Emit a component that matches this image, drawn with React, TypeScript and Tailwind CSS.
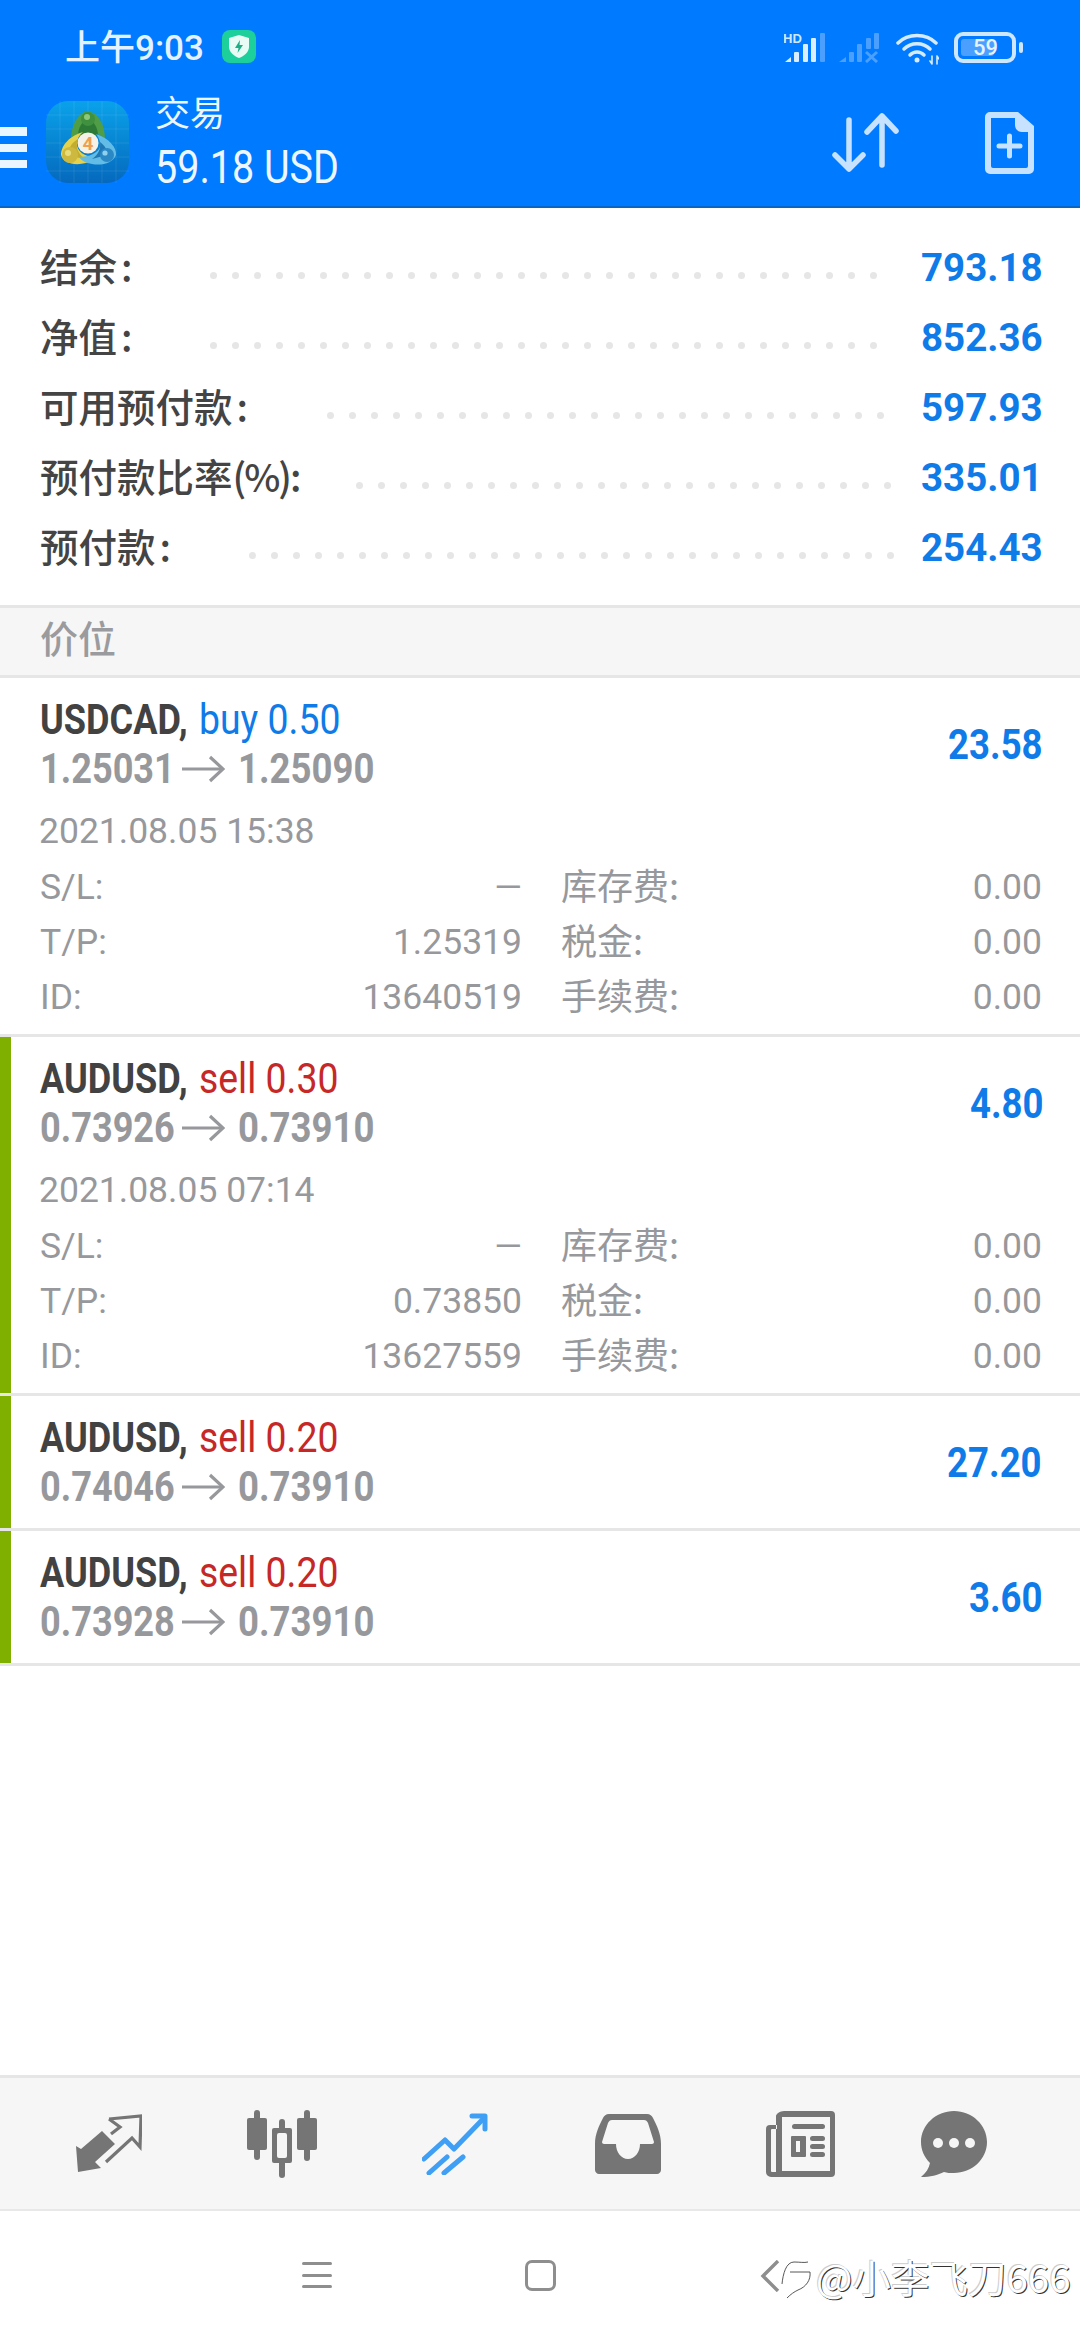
import React from "react";

const cjk = "font-['Noto_Sans_CJK_SC','Noto_Sans',sans-serif]";
const rb = "font-['Roboto','Noto_Sans_CJK_SC',sans-serif]";

function Dots({ n, mr }: { n: number; mr: string }) {
  return (
    <div className={`flex-1 flex justify-end gap-[15px] mt-[15px] overflow-hidden ${mr}`}>
      {Array.from({ length: n }).map((_, i) => (
        <span key={i} className="w-[7px] h-[7px] shrink-0 rounded-full bg-[#e6e6e6]" />
      ))}
    </div>
  );
}

function SummaryRow({ label, value, n, mr }: { label: React.ReactNode; value: string; n: number; mr: string }) {
  return (
    <div className="h-[70px] flex items-center">
      <span className={`${cjk} -mt-[6px] text-[38.5px] leading-[70px] font-medium text-[#444444] whitespace-nowrap`}>{label}</span>
      <Dots n={n} mr={mr} />
      <span className={`${rb} w-[120px] text-right text-[38.5px] font-bold text-[#0f7be8] whitespace-nowrap`}>{value}</span>
    </div>
  );
}

function Arrow() {
  return (
    <svg width="43" height="30" viewBox="0 0 43 30" className="mx-[13px] shrink-0" fill="none" stroke="#97989c" strokeWidth="3.2">
      <path d="M0 15H40" />
      <path d="M28 3L41 15L28 27" />
    </svg>
  );
}

function Price({ a, b }: { a: string; b: string }) {
  return (
    <div className={`${rb} h-[48px] mt-[1px] flex items-center text-[42px] leading-[48px] font-bold text-[#97989c]`}>
      <span className="w-[129px] whitespace-nowrap inline-block scale-x-[0.86] origin-left">{a}</span>
      <Arrow />
      <span className="w-[135px] whitespace-nowrap inline-block scale-x-[0.87] origin-left">{b}</span>
    </div>
  );
}

function Top({ sym, side, color, a, b, profit }: { sym: string; side: string; color: string; a: string; b: string; profit: string }) {
  return (
    <div className="h-[132px] flex justify-between items-center">
      <div>
        <div className={`${rb} h-[48px] text-[42px] leading-[48px] whitespace-nowrap`}>
          <span className="inline-block scale-x-[0.86] origin-left w-[159px] font-bold text-[#424242]">{sym},</span>
          <span className={`inline-block scale-x-[0.89] origin-left ${color}`}>{side}</span>
        </div>
        <Price a={a} b={b} />
      </div>
      <span className={`${rb} text-[42px] font-bold text-[#0f7be8] inline-block scale-x-[0.87] origin-right -mr-[1px]`}>{profit}</span>
    </div>
  );
}

function Cell({ l, v, cn }: { l: string; v: string; cn: boolean }) {
  return (
    <div className="flex justify-between h-[55px] items-center text-[35.5px] text-[#97989c]">
      <span className={cn ? `${cjk} -mt-[8px] text-[36px]` : rb}>{l}</span>
      <span className={rb}>{v}</span>
    </div>
  );
}

function Details({ date, tp, id }: { date: string; tp: string; id: string }) {
  return (
    <div>
      <div className={`${rb} h-[38px] mt-[2px] -ml-[1px] text-[35.5px] leading-[38px] text-[#97989c]`}>{date}</div>
      <div className="grid grid-cols-[482px_481px] gap-x-[39px] pt-[10px] pb-[9px]">
        <Cell l="S/L:" v="—" cn={false} />
        <Cell l="库存费:" v="0.00" cn />
        <Cell l="T/P:" v={tp} cn={false} />
        <Cell l="税金:" v="0.00" cn />
        <Cell l="ID:" v={id} cn={false} />
        <Cell l="手续费:" v="0.00" cn />
      </div>
    </div>
  );
}

function Row({ strip, children }: { strip: boolean; children: React.ReactNode }) {
  return (
    <div className="flex border-b-[3px] border-[#e6e6e6]">
      <div className={`w-[11px] shrink-0 ${strip ? "bg-[#7fb000]" : ""}`} />
      <div className="flex-1 pl-[29px] pr-[39px]">{children}</div>
    </div>
  );
}

function Logo() {
  return (
    <svg width="83" height="82" viewBox="0 0 83 82" className="shrink-0">
      <defs>
        <linearGradient id="lg" x1="0" y1="0" x2="0" y2="1">
          <stop offset="0" stopColor="#0aa2ea" />
          <stop offset="1" stopColor="#0569bd" />
        </linearGradient>
      </defs>
      <rect width="83" height="82" rx="22" fill="url(#lg)" />
      <path d="M14 0V82M28 0V82M42 0V82M56 0V82M70 0V82M0 14H83M0 28H83M0 42H83M0 56H83M0 70H83" stroke="#ffffff" strokeOpacity="0.09" strokeWidth="1" />
      <path d="M42 10C32 12 26 22 25 37C30 33 36 31 42 31C48 31 54 33 59 38C59 23 52 12 42 10Z" fill="#4f9d45" />
      <path d="M42 17C36 20 32 27 32 35L52 35C52 27 48 20 42 17Z" fill="#2c7a36" />
      <circle cx="42" cy="18" r="7" fill="#3f9140" />
      <circle cx="41" cy="16" r="3" fill="#8cc77a" />
      <path d="M37 31C25 34 15 44 15 54C17 62 28 65 40 62C45 61 48 59 50 56C38 56 31 50 31 43C31 38 33 34 37 31Z" fill="#e6d24a" />
      <path d="M32 38C25 42 21 49 23 56L38 57C32 53 29 45 32 38Z" fill="#c2ad30" />
      <circle cx="24" cy="54" r="8" fill="#cdb940" />
      <circle cx="22" cy="52" r="3" fill="#e9dc7c" />
      <path d="M50 33C63 37 71 47 70 54C67 62 56 65 46 63C40 62 36 60 33 56C43 56 52 52 54 46C55 41 53 37 50 33Z" fill="#62bce6" />
      <path d="M54 41C59 45 62 49 61 54L46 58C52 54 55 48 54 41Z" fill="#1f78b4" />
      <circle cx="61" cy="54" r="7" fill="#2a88c4" />
      <circle cx="59" cy="52" r="2.6" fill="#8fd0ef" />
      <circle cx="42" cy="42" r="10.5" fill="#f6f1e6" />
      <text x="42" y="49" textAnchor="middle" fontSize="19" fontWeight="700" fill="#ef9f52" fontFamily="Roboto">4</text>
    </svg>
  );
}

function StatusRight() {
  return (
    <div className="flex items-start">
      <svg width="41" height="31" viewBox="0 0 41 31">
        <text x="-1" y="11" fontSize="13" fontWeight="700" fill="#cfe8ff" fontFamily="Liberation Sans">HD</text>
        <path d="M1 30L7 25V30Z" fill="#dbeeff" />
        <rect x="10" y="20" width="5" height="10" rx="1" fill="#dbeeff" />
        <rect x="19" y="12" width="5" height="18" rx="1" fill="#dbeeff" />
        <rect x="27" y="6" width="5" height="24" rx="1" fill="#dbeeff" />
        <rect x="36" y="1" width="5" height="29" rx="1" fill="#4a9fff" />
      </svg>
      <svg width="40" height="31" viewBox="0 0 40 31" className="ml-[14px]" fill="#4a9fff">
        <path d="M0 30L7 25V30Z" />
        <rect x="10" y="20" width="5" height="10" rx="1" />
        <rect x="18" y="12" width="5" height="18" rx="1" />
        <rect x="27" y="6" width="5" height="11" rx="1" />
        <rect x="35" y="1" width="5" height="16" rx="1" />
        <path d="M27 20L38 30M38 20L27 30" stroke="#4a9fff" strokeWidth="3" fill="none" />
      </svg>
      <svg width="43" height="33" viewBox="0 0 43 33" className="ml-[17px]" fill="none" stroke="#d6ebff" strokeLinecap="round">
        <path d="M2 11C12 1 30 1 40 11" strokeWidth="3.5" />
        <path d="M8 17C15 10 27 10 34 17" strokeWidth="3.5" />
        <path d="M14 23C18 19 24 19 28 23" strokeWidth="3.5" />
        <circle cx="21" cy="28" r="2.5" fill="#d6ebff" stroke="none" />
        <path d="M36 24V32M36 32L34 29M41 32V24M41 24L43 27" strokeWidth="1.6" />
      </svg>
      <div className="ml-[15px] relative w-[62px] h-[31px] rounded-[9px] border-[4px] border-[#cfe6ff] flex items-center">
        <div className="ml-[3px] w-[33px] h-[17px] rounded-[3px] bg-[#4a9fff]" />
        <span className={`${rb} absolute left-[15px] top-[-3px] text-[22px] leading-[29px] font-medium text-[#e6f3ff]`}>59</span>
      </div>
      <div className="ml-[3px] mt-[10px] w-[4px] h-[11px] rounded-full bg-[#cfe6ff]" />
    </div>
  );
}

const navC = "#757575";

function NavIcons() {
  return (
    <div className="h-[133px] bg-[#f6f6f6] pl-[22px] flex items-center border-b-[2px] border-[#e8e8e8]">
      <div className="w-[173px] flex justify-center">
        <svg width="66" height="60" viewBox="0 0 66 60">
          <path d="M0 32L5 35L26 17L39 30L19 48L25 54L2 58Z" fill={navC} />
          <path d="M33 5L65 2L64 33L56 24L30 48M33 5L44 13L35 20" fill="none" stroke={navC} strokeWidth="3.2" strokeLinejoin="miter" />
        </svg>
      </div>
      <div className="w-[173px] flex justify-center">
        <svg width="70" height="68" viewBox="0 0 70 68" fill={navC}>
          <rect x="7" y="0" width="6" height="50" rx="3" />
          <rect x="0" y="8" width="20" height="32" rx="2" />
          <rect x="32" y="9" width="6" height="59" rx="3" />
          <rect x="25" y="18" width="20" height="35" rx="2" />
          <rect x="30" y="23" width="10" height="25" rx="2" fill="#f6f6f6" />
          <rect x="57" y="0" width="6" height="51" rx="3" />
          <rect x="50" y="8" width="20" height="32" rx="2" />
        </svg>
      </div>
      <div className="w-[173px] flex justify-center">
        <svg width="66" height="62" viewBox="0 0 66 62" fill="none" stroke="#3f9ff5" strokeWidth="5" strokeLinecap="round" strokeLinejoin="round">
          <path d="M2 46L23 27L32 36L62 5" />
          <path d="M50 3H63V16" />
          <path d="M25 44L7 60M41 44L22 60" />
        </svg>
      </div>
      <div className="w-[173px] flex justify-center">
        <svg width="66" height="60" viewBox="0 0 66 60">
          <path fillRule="evenodd" fill={navC} d="M14 0H52C55 0 57 2 58 4C62 12 66 20 66 30V56C66 58 64 60 62 60H4C2 60 0 58 0 56V30C0 20 4 12 8 4C9 2 11 0 14 0ZM17 6C15 6 14 7 13 9L7 28C7 29 8 30 9 30H21C21 38 26 45 33 45C40 45 45 38 45 30H57C58 30 59 29 59 28L53 9C52 7 51 6 49 6Z" />
        </svg>
      </div>
      <div className="w-[173px] flex justify-center">
        <svg width="69" height="66" viewBox="0 0 69 66" fill={navC}>
          <path fillRule="evenodd" d="M18 0H65a4 4 0 0 1 4 4V62a4 4 0 0 1-4 4H5a5 5 0 0 1-5-5V18a4 4 0 0 1 4-4H11V18H6a1 1 0 0 0-1 1V60a1 1 0 0 0 1 1H10V5C10 3 14 0 18 0ZM16 6V60H64V6Z" />
          <rect x="26" y="13" width="33" height="5" rx="2.5" />
          <path fillRule="evenodd" d="M26 25H39a1 1 0 0 1 1 1V45a1 1 0 0 1-1 1H26a1 1 0 0 1-1-1V26a1 1 0 0 1 1-1ZM30 30V41H34V30Z" />
          <rect x="44" y="25" width="15" height="5" rx="2.5" />
          <rect x="44" y="33" width="15" height="5" rx="2.5" />
          <rect x="44" y="41" width="15" height="5" rx="2.5" />
        </svg>
      </div>
      <div className="w-[133px] flex justify-center">
        <svg width="66" height="66" viewBox="0 0 66 66">
          <path fill={navC} d="M33 0C51 0 66 14 66 31C66 48 51 62 33 62C29 62 26 62 23 61C17 64 9 66 0 66C5 62 8 57 9 52C3 46 0 39 0 31C0 14 15 0 33 0Z" />
          <circle cx="17" cy="32" r="5" fill="#f6f6f6" />
          <circle cx="33" cy="32" r="5" fill="#f6f6f6" />
          <circle cx="49" cy="32" r="5" fill="#f6f6f6" />
        </svg>
      </div>
    </div>
  );
}

export default function App() {
  return (
    <div className="relative w-[1080px] h-[2340px] bg-white flex flex-col overflow-hidden">
      <header className="h-[208px] bg-[#007aff] border-b-[2px] border-[#0a66c4] shrink-0">
        <div className="h-[94px] flex justify-between pt-[32px] pr-[57px] pl-[65px]">
          <div className="flex items-start">
            <span className={`${rb} mt-[2px] text-[35px] leading-[30px] font-medium text-[#e4f2ff] whitespace-nowrap`}>上午9:03</span>
            <div className="ml-[18px] -mt-[2px] w-[34px] h-[33px] rounded-[8px] bg-[#1dcf9b] flex items-center justify-center">
              <svg width="20" height="23" viewBox="0 0 20 23">
                <path d="M10 0L20 3V12C20 17 15 21 10 23C5 21 0 17 0 12V3Z" fill="#e9fbf5" />
                <path d="M11 5L6 13H9.5L8.5 18L14 10H10.5Z" fill="#1dae84" />
              </svg>
            </div>
          </div>
          <StatusRight />
        </div>
        <div className="h-[112px] flex items-center">
          <div className="w-[27px] h-[41px] mt-[-6px] flex flex-col justify-between">
            <div className="h-[9px] bg-[#eaf5ff]" />
            <div className="h-[8px] bg-[#eaf5ff]" />
            <div className="h-[8px] bg-[#eaf5ff]" />
          </div>
          <div className="ml-[19px] mt-[-16px]">
            <Logo />
          </div>
          <div className="ml-[26px] flex-1 h-[103px] mt-[-19px] flex flex-col justify-between">
            <div className={`${cjk} text-[35px] leading-[44px] text-[#eef7ff]`}>交易</div>
            <div className={`${rb} text-[47px] leading-[50px] text-[#eef7ff] whitespace-nowrap scale-x-[0.84] origin-left`}>59.18 USD</div>
          </div>
          <svg width="67" height="60" viewBox="0 0 67 60" className="mr-[86px] mt-[-14px]" fill="none" stroke="#c6e2ff" strokeWidth="5.5" strokeLinecap="round" strokeLinejoin="round">
            <path d="M17 7V56M3 42L17 56L31 42" />
            <path d="M50 3V52M35 19L50 3L64 18" />
          </svg>
          <svg width="49" height="62" viewBox="0 0 49 62" className="mr-[46px] mt-[-14px]">
            <path fillRule="evenodd" fill="#c6e2ff" d="M5 0H33L49 14V57a5 5 0 0 1-5 5H5a5 5 0 0 1-5-5V5a5 5 0 0 1 5-5ZM6 6V54a2 2 0 0 0 2 2H41a2 2 0 0 0 2-2V20H37C33 20 30 17 30 13V6Z" />
            <path d="M24.5 24V44M14 34H35" stroke="#c6e2ff" strokeWidth="5" strokeLinecap="round" />
          </svg>
        </div>
      </header>

      <section className="pl-[40px] pr-[39px] h-[400px] pt-[25px] border-b-[3px] border-[#e6e6e6] shrink-0">
        <SummaryRow label={<>结余<span className="ml-[4px]">:</span></>} value="793.18" n={31} mr="mr-[44px]" />
        <SummaryRow label={<>净值<span className="ml-[4px]">:</span></>} value="852.36" n={31} mr="mr-[44px]" />
        <SummaryRow label={<>可用预付款<span className="ml-[4px]">:</span></>} value="597.93" n={26} mr="mr-[37px]" />
        <SummaryRow label={<>预付款比率<span className="tracking-[-2px]">(%):</span></>} value="335.01" n={25} mr="mr-[30px]" />
        <SummaryRow label={<>预付款<span className="ml-[4px]">:</span></>} value="254.43" n={30} mr="mr-[27px]" />
      </section>

      <div className={`${cjk} h-[70px] shrink-0 pl-[40px] bg-[#f6f6f6] border-b-[3px] border-[#e6e6e6] text-[38px] leading-[58px] font-medium text-[#9a9b9f]`}>价位</div>

      <div className="flex-1">
        <Row strip={false}>
          <Top sym="USDCAD" side="buy 0.50" color="text-[#0f7be8]" a="1.25031" b="1.25090" profit="23.58" />
          <Details date="2021.08.05 15:38" tp="1.25319" id="13640519" />
        </Row>
        <Row strip>
          <Top sym="AUDUSD" side="sell 0.30" color="text-[#c62828]" a="0.73926" b="0.73910" profit="4.80" />
          <Details date="2021.08.05 07:14" tp="0.73850" id="13627559" />
        </Row>
        <Row strip>
          <Top sym="AUDUSD" side="sell 0.20" color="text-[#c62828]" a="0.74046" b="0.73910" profit="27.20" />
        </Row>
        <Row strip>
          <Top sym="AUDUSD" side="sell 0.20" color="text-[#c62828]" a="0.73928" b="0.73910" profit="3.60" />
        </Row>
      </div>

      <div className="border-t-[3px] border-[#e6e6e6] shrink-0">
        <NavIcons />
      </div>

      <div className="h-[129px] shrink-0 bg-white flex items-start pt-[49px] pl-[302px]">
        <div className="w-[30px] h-[26px] mt-[2px] flex flex-col justify-between">
          <div className="h-[3px] rounded-full bg-[#8e8e8e]" />
          <div className="h-[3px] rounded-full bg-[#8e8e8e]" />
          <div className="h-[3px] rounded-full bg-[#8e8e8e]" />
        </div>
        <div className="ml-[193px] w-[31px] h-[31px] rounded-[7px] border-[3px] border-[#8e8e8e]" />
        <svg width="20" height="32" viewBox="0 0 20 32" className="ml-[204px]" fill="none" stroke="#8e8e8e" strokeWidth="3.4">
          <path d="M18 1L3 16L18 31" />
        </svg>
      </div>

      <div className="absolute left-[778px] top-[2254px] flex items-start">
        <svg width="38" height="46" viewBox="0 0 38 46" fill="none" stroke="#444" strokeWidth="0.9">
          <path d="M4 30C5 20 8 8 16 8C22 8 26 9 30 8M12 18H32M32 18C33 26 28 33 20 36C16 38 13 40 9 44" />
        </svg>
        <span className={`${cjk} text-[38.5px] leading-[44px] text-white whitespace-nowrap [text-shadow:1px_1px_0_#333,-1px_-1px_0_#cccccc]`}>@小李飞刀666</span>
      </div>
    </div>
  );
}
